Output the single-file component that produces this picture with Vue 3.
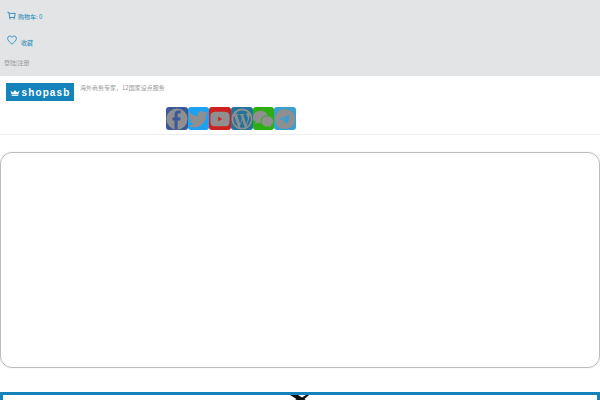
<template>
  <div class="page">
    <div class="topbar">
      <a class="top-link cart">
        <svg class="cart-icon" viewBox="0 0 24 24" fill="none" stroke="currentColor" stroke-width="2.400">
          <path d="M1 2h4l2 14h13l2-11H6"/>
          <path d="M8 16v5M19 16v5"/>
        </svg>
        <span>购物车: 0</span>
      </a>
      <a class="top-link fav">
        <svg class="heart-icon" viewBox="0 0 24 24" fill="none" stroke="currentColor" stroke-width="2">
          <path d="M12 22C5 16 1.500 12.500 1.500 8a5.500 5.500 0 0 1 10.500-2.300A5.500 5.500 0 0 1 22.500 8c0 4.500-3.500 8-10.500 14z"/>
        </svg>
        <span>收藏</span>
      </a>
      <div class="login">登陆|注册</div>
    </div>

    <header class="header">
      <div class="brand">
        <div class="logo">
          <svg class="crown" viewBox="0 0 24 16" fill="currentColor">
            <path d="M1 4l6 4 5-6 5 6 6-4-3 9H4z"/>
            <rect x="4" y="14" width="16" height="2"/>
          </svg>
          <span>shopasb</span>
        </div>
        <p class="tagline">海外商务专家，12国家设点服务</p>
      </div>
      <div class="socials">
        <span v-for="s in socials" :key="s.name" class="social" :style="{ background: s.color }">
          <svg viewBox="0 0 24 24" fill="#8f8f8f">
            <path v-for="(d, i) in s.paths" :key="i" :d="d"/>
            <path v-if="s.accent" :d="s.accent" :fill="s.accentColor"/>
          </svg>
        </span>
      </div>
    </header>

    <div class="content-box"></div>

    <div class="bottom-box">
      <svg class="bottom-mark" viewBox="0 0 24 8" fill="#111">
        <path d="M0 0h8l4 2.500L16 0h3l-4.500 4L19 8h-7l-2.500-2L6 8H1l5.500-4z"/>
        <circle cx="22" cy="7" r="1.200"/>
      </svg>
    </div>
  </div>
</template>

<script setup>
const socials = [
  {
    name: 'facebook',
    color: '#3b5998',
    paths: ['M12 .5a11.500 11.500 0 1 0 0 23 11.500 11.500 0 0 0 0-23z'],
    accent: 'M16 6h-2c-.9 0-1.300.5-1.300 1.300v3h3.200l-.5 3.300h-2.700V23.500h-3.400v-9.900H7v-3.300h2.300V7c0-2.700 1.600-4.200 4-4.200H16z',
    accentColor: '#3b5998'
  },
  {
    name: 'twitter',
    color: '#1da1f2',
    paths: ['M23 5.500c-.8.400-1.700.6-2.600.7.900-.6 1.700-1.400 2-2.500-.9.500-1.900.9-2.900 1.100A4.500 4.500 0 0 0 11.800 9C8 8.800 4.600 7 2.400 4.200c-1.200 2.100-.6 4.700 1.400 6-.7 0-1.400-.2-2-.5 0 2.100 1.500 4 3.600 4.500-.7.200-1.400.2-2 .1.600 1.800 2.200 3.100 4.200 3.100A9 9 0 0 1 1 19.200 12.800 12.800 0 0 0 20.700 8c.9-.6 1.700-1.500 2.300-2.500z']
  },
  {
    name: 'youtube',
    color: '#cd201f',
    paths: ['M22 6.500c-.3-1-1-1.700-2-2C18.300 4 12 4 12 4s-6.300 0-8 .5c-1 .3-1.700 1-2 2C1.500 8.200 1.500 12 1.500 12s0 3.800.5 5.500c.3 1 1 1.700 2 2 1.700.5 8 .5 8 .5s6.300 0 8-.5c1-.3 1.700-1 2-2 .5-1.700.5-5.500.5-5.500s0-3.800-.5-5.500z'],
    accent: 'M10 9.500v5l4.500-2.500z',
    accentColor: '#cd201f'
  },
  {
    name: 'wordpress',
    color: '#21759b',
    paths: ['M12 .5a11.500 11.500 0 1 0 0 23 11.500 11.500 0 0 0 0-23z'],
    accent: 'M2.500 12c0-1.400.3-2.700.8-3.900l4.600 12.500A9.500 9.500 0 0 1 2.500 12zm9.500 9.500c-.9 0-1.800-.1-2.700-.4l2.900-8.200 2.900 8A9.500 9.500 0 0 1 12 21.500zm1.300-14c.6 0 1.100-.1 1.100-.1.500-.1.400-.8-.1-.8 0 0-1.500.1-2.400.1-.9 0-2.400-.1-2.400-.1-.5 0-.6.8 0 .8l1 .1 1.400 3.900-2 5.900-3.300-9.800c.6 0 1.100-.1 1.100-.1.500-.1.400-.8-.1-.8 0 0-1.500.1-2.400.1h-.6A9.500 9.500 0 0 1 18.400 5h-.1c-.9 0-1.600.8-1.600 1.700 0 .8.400 1.400.9 2.200.4.600.8 1.500.8 2.600 0 .8-.3 1.800-.7 3l-1 3.200zM20.400 7.400A9.500 9.500 0 0 1 16.800 20.300l2.900-8.400c.5-1.400.7-2.500.7-3.400 0-.4 0-.8-.1-1.100z',
    accentColor: '#21759b'
  },
  {
    name: 'wechat',
    color: '#2dae12',
    paths: [
      'M9 3C4.600 3 1 6 1 9.700c0 2.200 1.200 4 3.200 5.300l-.8 2.400 2.800-1.400c1 .3 1.900.5 2.800.5h.7c-.2-.6-.3-1.200-.3-1.800 0-3.500 3-6.300 6.900-6.300h.7C16.300 5.200 13 3 9 3z',
      'M23 14.600c0-3-3-5.500-6.300-5.500-3.500 0-6.300 2.500-6.300 5.500s2.800 5.500 6.300 5.500c.7 0 1.400-.1 2.100-.3l2.200 1.200-.6-2C21.900 17.800 23 16.300 23 14.600z'
    ]
  },
  {
    name: 'telegram',
    color: '#39a0d0',
    paths: ['M12 1a11 11 0 1 0 0 22 11 11 0 0 0 0-22z'],
    accent: 'M6.500 11.800l9.500-3.800c.5-.2.900.1.800.8l-1.600 7.400c-.1.600-.5.700-1 .4l-2.400-1.800-1.200 1.200c-.2.200-.3.300-.6.300l.2-2.500 4.500-4c.2-.2 0-.3-.3-.1l-5.600 3.500-2.300-.7c-.6-.2-.6-.5 0-.7z',
    accentColor: '#2f9fe0'
  }
]
</script>

<style scoped>
.page {
  width: 600px;
  height: 400px;
  overflow: hidden;
  background: #fff;
  font-family: "Noto Sans CJK SC", "Liberation Sans", sans-serif;
}

.topbar {
  height: 76px;
  box-sizing: border-box;
  padding: 10px 4px 0;
  background: #e2e4e6;
}

.top-link {
  display: flex;
  align-items: center;
  color: #1f88bd;
  font-size: 6px;
}

.cart {
  height: 12px;
  padding-left: 3px;
  gap: 2px;
}
.cart-icon {
  width: 9px;
  height: 10px;
}

.fav {
  height: 14px;
  margin-top: 11px;
  padding-left: 3px;
  gap: 4px;
}
.fav span {
  padding-top: 5px;
}
.heart-icon {
  width: 10px;
  height: 10px;
}

.login {
  margin-top: 11px;
  font-size: 6px;
  line-height: 10px;
  color: #999;
}

.header {
  height: 59px;
  box-sizing: border-box;
  padding-top: 7px;
  border-bottom: 1px solid #eee;
}

.brand {
  display: flex;
  align-items: flex-start;
  gap: 6px;
  padding-left: 6px;
}

.logo {
  width: 68px;
  height: 18px;
  display: flex;
  align-items: center;
  justify-content: center;
  gap: 2px;
  background: #1583bb;
  color: #fff;
  font-family: "Liberation Sans", sans-serif;
  font-size: 10px;
  font-weight: 700;
  letter-spacing: 1.100px;
}
.crown {
  width: 10px;
  height: 7px;
}

.tagline {
  margin: 0;
  font-size: 6px;
  line-height: 10px;
  color: #999;
}

.socials {
  display: flex;
  margin: 6px 0 0 166px;
}

.social {
  width: 21.67px;
  height: 23px;
  display: flex;
  align-items: center;
  justify-content: center;
  border-radius: 3px;
  flex-shrink: 0;
}
.social svg {
  width: 22px;
  height: 22px;
  flex-shrink: 0;
}

.content-box {
  height: 216px;
  box-sizing: border-box;
  margin-top: 17px;
  border: 1px solid #bdbdbd;
  border-radius: 12px;
  box-shadow: 0 0 1px #ccc;
}

.bottom-box {
  height: 60px;
  margin-top: 24px;
  box-sizing: border-box;
  border: 3px solid #1583bb;
  border-bottom: none;
  display: flex;
  justify-content: center;
}

.bottom-mark {
  width: 24px;
  height: 8px;
  flex-shrink: 0;
  margin-left: 3px;
}
</style>
